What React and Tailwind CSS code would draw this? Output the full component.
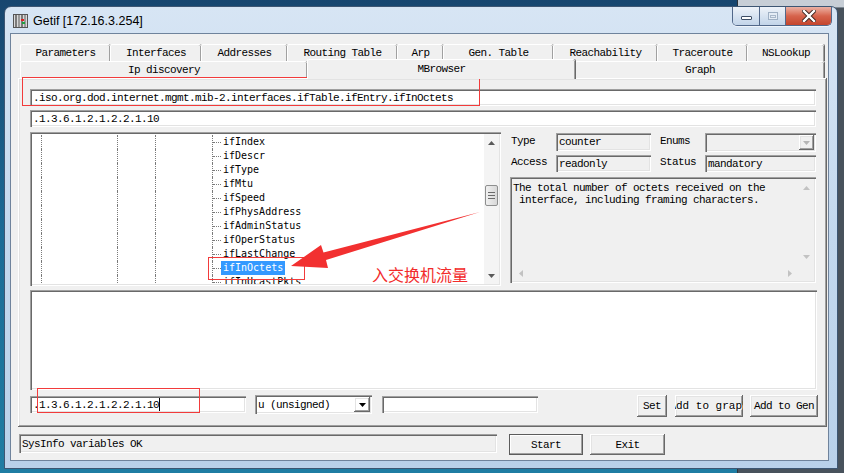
import React from 'react';

const MONO = "font-['Liberation_Mono','DejaVu_Sans_Mono',monospace] text-[11px] tracking-[-0.6px] leading-[12px] text-black whitespace-nowrap";
const TREE_FONT = "font-['DejaVu_Sans_Mono',monospace] text-[10px] leading-[12px] whitespace-nowrap";
const SUNKEN = 'shadow-[inset_1px_1px_0_#a0a0a0,inset_2px_2px_0_#696969,inset_-1px_-1px_0_#ffffff,inset_-2px_-2px_0_#e3e3e3]';
const RAISED = 'shadow-[inset_-1px_-1px_0_#696969,inset_1px_1px_0_#ffffff,inset_-2px_-2px_0_#a0a0a0,inset_2px_2px_0_#e3e3e3]';
const DOT = 'border-l border-dotted border-[#7a7a7a]';

const TOP_TABS = [
  { label: 'Parameters', w: 'w-[90px]' },
  { label: 'Interfaces', w: 'w-[91px]' },
  { label: 'Addresses', w: 'w-[86px]' },
  { label: 'Routing Table', w: 'w-[110px]' },
  { label: 'Arp', w: 'w-[46px]' },
  { label: 'Gen. Table', w: 'w-[110px]' },
  { label: 'Reachability', w: 'w-[104px]' },
  { label: 'Traceroute', w: 'w-[90px]' },
  { label: 'NSLookup', w: 'w-[77px]' },
];

const FRONT_TABS = [
  { label: 'Ip discovery', w: 'w-[287px]' },
  { label: 'MBrowser', w: 'w-[268px]', active: true },
  { label: 'Graph', w: 'w-[249px]' },
];

const NODES = [
  'ifIndex', 'ifDescr', 'ifType', 'ifMtu', 'ifSpeed', 'ifPhysAddress', 'ifAdminStatus',
  'ifOperStatus', 'ifLastChange', 'ifInOctets', 'ifInUcastPkts',
];

function Tri({ dir, color = '#5a5a5a' }) {
  const pts = { up: '0,4 3.5,0 7,4', down: '0,0 3.5,4 7,0', left: '4,0 0,3.5 4,7', right: '0,0 4,3.5 0,7' }[dir];
  const wide = dir === 'up' || dir === 'down';
  return (
    <svg width={wide ? 7 : 4} height={wide ? 4 : 7}>
      <polygon points={pts} fill={color} />
    </svg>
  );
}

function Tab({ label, w, active }) {
  return (
    <div
      className={`${w} ${MONO} flex items-center justify-center border-l border-t border-white rounded-t-[2px] shadow-[inset_-1px_0_0_#a0a0a0,1px_0_0_#696969]
        ${active ? 'relative z-10 -mt-[2px] h-[20px] bg-[#f0f0f0] pb-[2px]' : 'h-full'}`}
    >
      {label}
    </div>
  );
}

function Field({ className = '', gray, children }) {
  return (
    <div className={`${className} ${SUNKEN} ${gray ? 'bg-[#f0f0f0]' : 'bg-white'} ${MONO} flex items-center pl-[3px] overflow-hidden`}>
      {children}
    </div>
  );
}

function Button({ className = '', disabled, isDefault, children }) {
  return (
    <div
      className={`${className} ${MONO} flex items-center justify-center overflow-hidden bg-[#f0f0f0]
        ${isDefault ? 'border border-[#5c5c5c] shadow-[inset_-1px_-1px_0_#a0a0a0,inset_1px_1px_0_#ffffff]' : RAISED}
        ${disabled ? 'text-[#a0a0a0] [text-shadow:1px_1px_0_#ffffff] tracking-[0px]' : ''}`}
    >
      {children}
    </div>
  );
}

function TreeView() {
  return (
    <div className={`w-[471px] h-[154px] bg-white ${SUNKEN} p-[2px] flex`}>
      <div className="flex-1 overflow-hidden pt-[1px]">
        {NODES.map((n) => {
          const sel = n === 'ifInOctets';
          return (
            <div key={n} className="flex h-[14px]">
              <div className="w-[9px]" />
              <div className={`w-[76px] ${DOT}`} />
              <div className={`w-[38px] ${DOT}`} />
              <div className={`w-[57px] ${DOT}`} />
              <div className={`w-[9px] ${DOT} flex items-center`}>
                <div className="w-full border-t border-dotted border-[#7a7a7a]" />
              </div>
              <span className={`${TREE_FONT} px-[2px] flex items-center ${sel ? 'bg-[#3399ff] text-white' : 'text-black'}`}>{n}</span>
            </div>
          );
        })}
      </div>
      <div className="w-[15px] flex flex-col bg-[#f4f4f4]">
        <div className="h-[17px] flex items-center justify-center"><Tri dir="up" /></div>
        <div className="h-[34px]" />
        <div className="h-[21px] mx-[1px] rounded-[2px] border border-[#8e8f8f] bg-linear-to-r from-[#f0f0f0] to-[#d8d8d8] flex flex-col items-center justify-center gap-[2px]">
          <div className="w-[7px] h-px bg-[#6a6a6a]" />
          <div className="w-[7px] h-px bg-[#6a6a6a]" />
          <div className="w-[7px] h-px bg-[#6a6a6a]" />
        </div>
        <div className="flex-1" />
        <div className="h-[17px] flex items-center justify-center"><Tri dir="down" /></div>
      </div>
    </div>
  );
}

function InfoPanel() {
  return (
    <div className="w-[306px] flex flex-col">
      <div className="flex h-[19px] mt-[1px]">
        <span className={`w-[46px] pl-[1px] pt-[2px] ${MONO}`}>Type</span>
        <Field gray className="w-[95px] h-[18px]">counter</Field>
        <span className={`w-[54px] pl-[9px] pt-[2px] ${MONO}`}>Enums</span>
        <div className={`w-[111px] h-[19px] bg-[#f0f0f0] ${SUNKEN} flex justify-end p-[2px]`}>
          <div className={`w-[15px] ${RAISED} flex items-center justify-center`}><Tri dir="down" color="#b5b5b5" /></div>
        </div>
      </div>
      <div className="flex h-[18px] mt-[3px]">
        <span className={`w-[46px] pl-[1px] pt-[1px] ${MONO}`}>Access</span>
        <Field gray className="w-[95px] h-[17px]">readonly</Field>
        <span className={`w-[54px] pl-[9px] pt-[1px] ${MONO}`}>Status</span>
        <Field gray className="w-[111px] h-[17px]">mandatory</Field>
      </div>
      <div className={`mt-[4px] h-[106px] bg-[#f0f0f0] ${SUNKEN} p-[2px] flex flex-col`}>
        <div className="flex flex-1">
          <div className={`flex-1 ${MONO} whitespace-pre pt-[3px] pl-[1px]`}>
            {'The total number of octets received on the\n interface, including framing characters.'}
          </div>
          <div className="w-[16px] flex flex-col">
            <div className="h-[17px] flex items-center justify-center"><Tri dir="up" color="#c2c2c2" /></div>
            <div className="flex-1" />
            <div className="h-[17px] flex items-center justify-center"><Tri dir="down" color="#c2c2c2" /></div>
          </div>
        </div>
        <div className="h-[16px] flex">
          <div className="w-[17px] flex items-center justify-center"><Tri dir="left" color="#c2c2c2" /></div>
          <div className="flex-1" />
          <div className="w-[17px] flex items-center justify-center"><Tri dir="right" color="#c2c2c2" /></div>
          <div className="w-[16px]" />
        </div>
      </div>
    </div>
  );
}

function AppIcon() {
  return (
    <svg width="15" height="14" viewBox="0 0 15 14">
      <rect x="0.5" y="0.5" width="14" height="13" fill="#d9d9d9" stroke="#555" />
      <rect x="2" y="1" width="2" height="12" fill="#7a7a7a" />
      <rect x="5" y="1" width="2" height="12" fill="#9a9a9a" />
      <rect x="8" y="1" width="2" height="12" fill="#7a7a7a" />
      <rect x="11" y="1" width="2" height="12" fill="#9a9a9a" />
      <rect x="8" y="5" width="3" height="2" fill="#e02020" />
      <rect x="9" y="8" width="3" height="2" fill="#20a040" />
    </svg>
  );
}

function TitleButtons() {
  return (
    <div className="flex h-[19px] mr-[5px] rounded-b-[5px] border border-t-0 border-[#52688a] overflow-hidden shadow-[0_1px_0_#ffffff99]">
      <div className="w-[27px] bg-linear-to-b from-[#eef3f9] to-[#c2d4e9] border-r border-[#52688a] flex items-center justify-center">
        <div className="w-[11px] h-[4px] bg-white border border-[#3f4f66] rounded-[1px] mt-[4px]" />
      </div>
      <div className="w-[26px] bg-linear-to-b from-[#eef3f9] to-[#c2d4e9] border-r border-[#52688a] flex items-center justify-center">
        <div className="w-[10px] h-[8px] border border-[#9fb0c4] bg-[#e4ecf5] flex items-center justify-center">
          <div className="w-[6px] h-[3px] border border-[#a9b8ca]" />
        </div>
      </div>
      <div className="w-[45px] bg-linear-to-b from-[#eab1a4] via-[#d6634c] to-[#c4452d] flex items-center justify-center">
        <svg width="14" height="12" viewBox="0 0 14 12">
          <path d="M2 1 L12 11 M12 1 L2 11" stroke="#3a2420" strokeWidth="4.2" strokeLinecap="square" />
          <path d="M2 1 L12 11 M12 1 L2 11" stroke="#ffffff" strokeWidth="2.4" strokeLinecap="square" />
        </svg>
      </div>
    </div>
  );
}

export default function App() {
  return (
    <div className="relative w-[844px] h-[473px] overflow-hidden bg-linear-to-b from-[#17466f] via-[#1b6b96] to-[#1f7da3]">
      {/* window behind, top right */}
      <div className="absolute left-[737px] top-0 w-[120px] h-[480px] bg-[#48525c] border-l border-[#2d343b]">
        <div className="h-[8px] bg-[#c7ced6] border-b border-[#7c8792]" />
      </div>

      {/* Getif window */}
      <div className="absolute left-[4px] top-[6px] w-[834px] h-[463px] rounded-t-[7px] border border-[#3d5673] bg-linear-to-b from-[#d7e5f4] via-[#c3d8ee] to-[#b9d1ea] flex flex-col">
        <div className="h-[26px] flex items-start justify-between">
          <div className="flex items-center h-[22px] mt-[3px] ml-[8px] gap-[5px]">
            <AppIcon />
            <span className="font-['Liberation_Sans',Arial,sans-serif] text-[12.5px] text-black">Getif [172.16.3.254]</span>
          </div>
          <TitleButtons />
        </div>

        <div className="ml-[5px] mr-[8px] mb-[7px] flex-1 border border-[#6f839c] bg-[#f0f0f0] pt-[10px] pl-[7px] pr-[1px] pb-[5px] flex flex-col">
          {/* tab headers */}
          <div className="ml-[2px] flex h-[17px]">
            {TOP_TABS.map((t) => <Tab key={t.label} {...t} />)}
          </div>
          <div className="ml-[2px] flex items-start h-[17px]">
            {FRONT_TABS.map((t) => <Tab key={t.label} {...t} />)}
          </div>

          {/* tab page */}
          <div className={`h-[349px] ${RAISED} pl-[12px] pr-[9px] pt-[11px] flex flex-col`}>
            <Field className="w-[786px] h-[17px]">.iso.org.dod.internet.mgmt.mib-2.interfaces.ifTable.ifEntry.ifInOctets</Field>
            <Field className="w-[786px] h-[17px] mt-[4px]">.1.3.6.1.2.1.2.2.1.10</Field>

            <div className="flex gap-[9px] mt-[5px]">
              <TreeView />
              <InfoPanel />
            </div>

            <div className={`w-[787px] h-[100px] mt-[4px] bg-white ${SUNKEN}`} />

            <div className="flex items-start mt-[5px] h-[22px]">
              <Field className="w-[216px] h-[17px] mt-[1px]">
                .1.3.6.1.2.1.2.2.1.10<span className="w-px h-[13px] bg-black" />
              </Field>
              <div className={`ml-[9px] w-[117px] h-[19px] bg-white ${SUNKEN} flex p-[2px]`}>
                <span className={`${MONO} flex-1 flex items-center pl-[1px]`}>u (unsigned)</span>
                <div className={`w-[16px] ${RAISED} flex items-center justify-center`}><Tri dir="down" color="#000" /></div>
              </div>
              <Field className="ml-[10px] w-[156px] h-[17px] mt-[1px]" />
              <div className="flex-1" />
              <Button className="w-[30px] h-[22px]">Set</Button>
              <Button disabled className="ml-[8px] w-[68px] h-[22px]">Add to graph</Button>
              <Button className="ml-[7px] w-[68px] h-[22px]">Add to Gen</Button>
            </div>
          </div>

          {/* status row */}
          <div className="flex items-start mt-[7px]">
            <Field gray className="ml-[1px] w-[478px] h-[19px]">SysInfo variables OK</Field>
            <Button isDefault className="ml-[12px] w-[74px] h-[21px]">Start</Button>
            <Button className="ml-[7px] w-[75px] h-[21px]">Exit</Button>
          </div>
        </div>
      </div>

      {/* red annotations */}
      <div className="absolute left-[22px] top-[77px] w-[458px] h-[29px] border border-[#f23b3b]" />
      <div className="absolute left-[208px] top-[257px] w-[97px] h-[23px] border border-[#f23b3b]" />
      <div className="absolute left-[37px] top-[388px] w-[163px] h-[25px] border border-[#f23b3b]" />
      <svg className="absolute left-0 top-0 pointer-events-none" width="844" height="473">
        <polygon points="291,266 321,245 323.5,252.5 480,212 326,260 328,268" fill="#f23030" />
      </svg>
      <span className="absolute left-[372px] top-[264px] font-['Noto_Sans_CJK_SC',sans-serif] text-[16px] leading-[20px] text-[#f22b2b]">
        入交换机流量
      </span>
    </div>
  );
}
